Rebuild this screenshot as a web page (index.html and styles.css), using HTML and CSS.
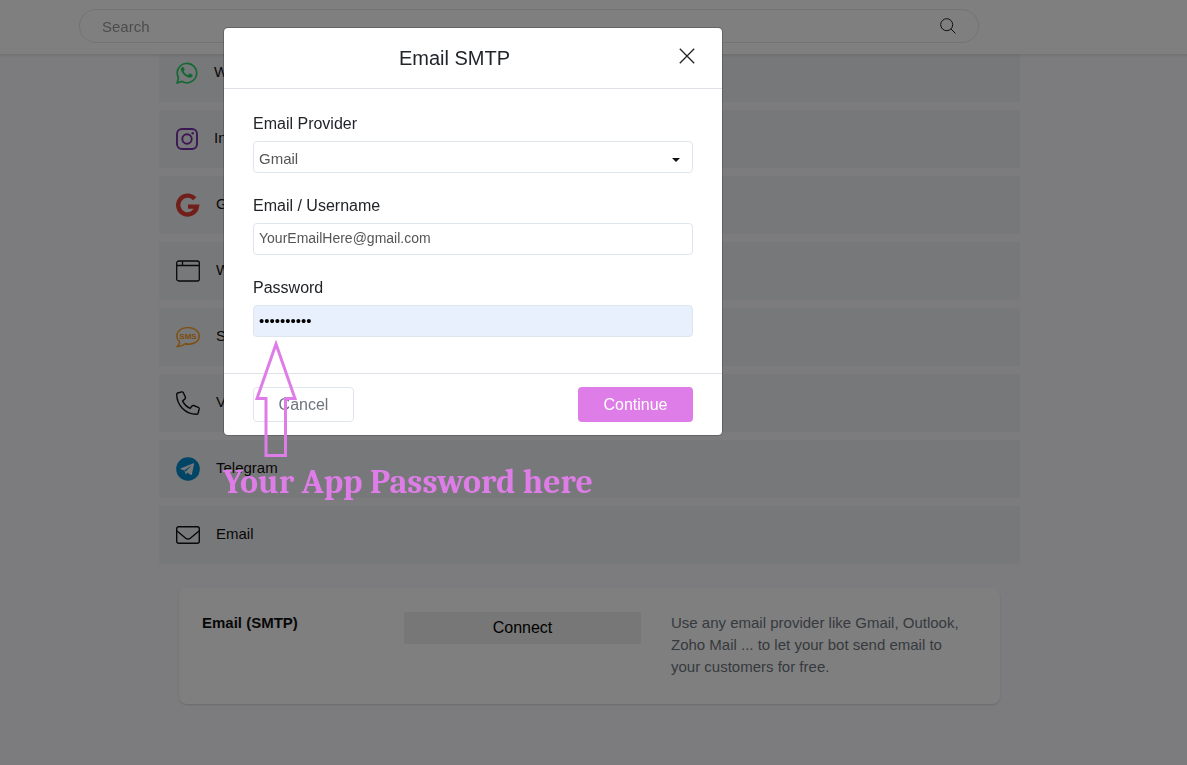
FILE: index.html
```html
<!DOCTYPE html>
<html lang="en">
<head>
    <meta charset="UTF-8">
    <meta name="viewport" content="width=device-width, initial-scale=1.0">
    <title>Email SMTP</title>
    <link rel="stylesheet" href="styles.css">
</head>
<body>
    <header class="topbar">
        <form class="search" role="search">
            <input type="search" placeholder="Search" aria-label="Search">
            <button type="button" aria-label="Search">
                <svg width="16" height="16" viewBox="0 0 16 16" fill="none" stroke="#222" stroke-width="1"><circle cx="6.700" cy="6.700" r="6"/><path d="M11 11l4.500 4.500"/></svg>
            </button>
        </form>
    </header>

    <main class="content">
        <ul class="channels">
            <li><a href="#">
                <svg width="22" height="22" viewBox="0 0 22 22"><path d="M1.200 20.800L2.500 15.800A9.700 9.700 0 1 1 6.200 19.500z" fill="none" stroke="#25d366" stroke-width="1.700"/><path d="M7.700 5.600c-.3-.6-.6-.6-1-.6-.9 0-1.900 1.100-1.900 2.600 0 1.400 1.100 3 2.700 4.700 2.100 2.100 4.500 3.400 6.300 3.400 1.500 0 2.700-1 2.800-2 .1-.8 0-.9-.3-1.100l-2.300-1.100c-.4-.2-.6-.1-.9.300l-.9 1.100c-.2.200-.4.200-.7.100-1.600-.6-3-1.900-3.800-3.400-.1-.3 0-.5.200-.7l.7-.9c.1-.3.1-.5 0-.7z" fill="#25d366"/></svg>
                <span>WhatsApp</span></a></li>
            <li><a href="#">
                <svg width="22" height="22" viewBox="0 0 22 22" fill="none" stroke="#7630a8" stroke-width="1.900"><rect x="1" y="1" width="20" height="20" rx="5"/><circle cx="11" cy="11" r="4.700"/><circle cx="16.700" cy="5.300" r="1.200" fill="#7630a8" stroke="none"/></svg>
                <span>Instagram</span></a></li>
            <li><a href="#">
                <svg width="24" height="24" viewBox="0 0 24 24"><path d="M18.700 5.800A9.400 9.400 0 1 0 20.900 13.600H12" fill="none" stroke="#e33e35" stroke-width="4.400"/></svg>
                <span>Google</span></a></li>
            <li><a href="#">
                <svg width="24" height="22" viewBox="0 0 24 22" fill="none" stroke="#111" stroke-width="1.300"><rect x=".7" y="1" width="22.600" height="20" rx="2"/><path d="M1 5.500h22M6.500 1.200v4.300"/></svg>
                <span>Website</span></a></li>
            <li><a href="#">
                <svg width="24" height="24" viewBox="0 0 24 24"><path d="M3.400 16.400C-2.400 10.400 2.300 2.600 12 2.600c6.100 0 11.300 3.500 11.300 8.300 0 5.800-6.800 9.700-14.100 7.900-2.500 2-5.200 2.900-7.900 2.700 1.900-1.600 2.700-3.200 2.100-5.100z" fill="none" stroke="#ff9a16" stroke-width="1.400"/><text x="12" y="14" text-anchor="middle" class="sms-text">SMS</text></svg>
                <span>SMS</span></a></li>
            <li><a href="#">
                <svg width="24" height="24" viewBox="0 0 24 24" fill="none" stroke="#111" stroke-width="1.400"><path d="M5.700.9L1.700 2C1 2.200.7 2.800.7 3.500 1 14.600 9.300 23 20.600 23.300c.7 0 1.300-.4 1.500-1.100l1.100-4.300c.1-.6-.2-1.300-.9-1.500l-4.700-1.900c-.6-.2-1.200 0-1.600.5l-1.900 2.400C10.800 15.900 8.100 13.200 6.600 9.900L9 7.900c.4-.4.600-1 .4-1.600L7.400 1.700C7.100 1.100 6.400.8 5.700.9z"/></svg>
                <span>Voice</span></a></li>
            <li><a href="#">
                <svg width="24" height="24" viewBox="0 0 24 24"><circle cx="12" cy="12" r="11.800" fill="#0088cc"/><path d="M18.100 6.100L5 11.200c-.8.300-.8.800 0 1.100l3.200 1.100 7.500-4.800-5.900 5.700 4.900 3.600c.6.400 1 .2 1.200-.6l2.200-10.400c.2-.8-.2-1.100-1-.8z" fill="#eceef0"/><path d="M8.500 13.600l1.200 4 2-2.200z" fill="#eceef0"/></svg>
                <span>Telegram</span></a></li>
            <li><a href="#">
                <svg width="24" height="18" viewBox="0 0 24 18" fill="none" stroke="#111" stroke-width="1.400"><rect x=".7" y=".7" width="22.600" height="16.600" rx="2"/><path d="M1 5l8.700 7.200c1.500 1.100 3.100 1.100 4.600 0L23 5"/></svg>
                <span>Email</span></a></li>
        </ul>

        <section class="card">
            <h2>Email (SMTP)</h2>
            <button type="button" class="connect">Connect</button>
            <p>Use any email provider like Gmail, Outlook, Zoho Mail ... to let your bot send email to your customers for free.</p>
        </section>
    </main>

    <div class="backdrop">
        <div class="modal" role="dialog" aria-labelledby="modal-title">
            <div class="modal-header">
                <h1 id="modal-title">Email SMTP</h1>
                <button type="button" class="close" aria-label="Close">
                    <svg width="16" height="16" viewBox="0 0 16 16" stroke="#222" stroke-width="1.300"><path d="M.8.800l14.400 14.400M15.200.800L.8 15.200"/></svg>
                </button>
            </div>
            <form id="smtp-form" class="modal-body">
                <div class="field">
                    <label for="provider">Email Provider</label>
                    <div class="select">
                        <select id="provider">
                            <option>Gmail</option>
                            <option>Outlook</option>
                            <option>Zoho Mail</option>
                        </select>
                    </div>
                </div>
                <div class="field">
                    <label for="username">Email / Username</label>
                    <input type="text" id="username" value="YourEmailHere@gmail.com">
                </div>
                <div class="field">
                    <label for="password">Password</label>
                    <input type="password" id="password" class="filled" value="apppasswrd">
                </div>
            </form>
            <div class="modal-footer">
                <button type="button" class="cancel">Cancel</button>
                <button type="submit" form="smtp-form" class="continue">Continue</button>
            </div>
            <div class="hint">
                <svg width="42" height="118" viewBox="0 0 42 118" fill="none" stroke="#df7de8" stroke-width="3"><path d="M21 4L2 58.500h9v57h19.500v-57H40z"/></svg>
                <p>Your App Password here</p>
            </div>
        </div>
    </div>
</body>
</html>
```
FILE: styles.css
```css
* {
    box-sizing: border-box;
}
body {
    font-family: "Liberation Sans", Arial, sans-serif;
    font-size: 15px;
    margin: 0;
    color: #111;
    background: #f8f9fc;
}
button, input, select {
    font-family: inherit;
}
button {
    padding: 0;
    border: none;
    background: none;
    cursor: pointer;
}
svg {
    display: block;
    flex: none;
}

/* top bar */
.topbar {
    position: fixed;
    top: 0;
    left: 0;
    right: 0;
    z-index: 1;
    height: 54px;
    padding: 9px 208px 0 79px;
    background: #fff;
    box-shadow: 0 1px 2px 1px rgba(0, 0, 0, 0.08);
}
.search {
    display: flex;
    align-items: center;
    height: 34px;
    padding: 0 22px;
    border: 1px solid #e6e6e6;
    border-radius: 17px;
}
.search input {
    flex: 1;
    padding: 0;
    border: none;
    outline: none;
    background: none;
    font-size: 15px;
}
.search input::placeholder {
    color: #999;
}

/* channel list */
.content {
    padding: 44px 167px 0 159px;
}
.channels {
    display: flex;
    flex-direction: column;
    gap: 8px;
    margin: 0;
    padding: 0;
    list-style: none;
}
.channels a {
    display: flex;
    align-items: center;
    gap: 16px;
    height: 58px;
    padding: 0 17px;
    border-radius: 2px;
    background: #eff0f2;
    color: #111;
    text-decoration: none;
}
.channels span {
    padding-bottom: 4px;
}
.sms-text {
    font-size: 8px;
    font-weight: bold;
    fill: #ff9a16;
}

.card {
    display: grid;
    grid-template-columns: 172fr 237fr 300fr;
    gap: 30px;
    align-items: start;
    min-height: 116px;
    margin: 24px 20px;
    padding: 24px 29px 24px 23px;
    border-radius: 8px;
    background: #fff;
    box-shadow: 0 1px 2px rgba(0, 0, 0, 0.15);
}
.card h2 {
    margin: 0;
    font-size: 15px;
    line-height: 22px;
}
.card p {
    margin: 0;
    line-height: 22px;
    color: #6c757d;
}
.connect {
    height: 32px;
    border-radius: 3px;
    background: #efefef;
    color: #000;
    font-size: 16px;
}

/* modal */
.backdrop {
    position: fixed;
    inset: 0;
    z-index: 2;
    padding: 27px 223px;
    background: rgba(0, 0, 0, 0.5);
}
.modal {
    position: relative;
    max-width: 500px;
    border: 1px solid rgba(0, 0, 0, 0.2);
    border-radius: 5px;
    background: #fff;
    background-clip: padding-box;
}
.modal-header {
    display: flex;
    align-items: center;
    gap: 23px;
    height: 61px;
    padding: 0 27px 0 29px;
    border-bottom: 1px solid #dee2e6;
}
.modal-header h1 {
    flex: 1;
    margin: 0;
    font-size: 20px;
    font-weight: normal;
    text-align: center;
    color: #212529;
}
.close {
    padding-bottom: 4px;
}
.modal-body {
    display: flex;
    flex-direction: column;
    gap: 21px;
    padding: 23px 29px 36px;
}
.field {
    display: flex;
    flex-direction: column;
    gap: 5px;
}
.field label {
    font-size: 16px;
    line-height: 24px;
    color: #212529;
}
.field input, .field select {
    width: 100%;
    height: 32px;
    padding: 0 5px 2px;
    border: 1px solid #dfe5ee;
    border-radius: 4px;
    background: #fff;
    color: #555;
    font-size: 14px;
}
.field select {
    appearance: none;
    padding: 2px 5px 0;
    font-size: 15px;
}
.select {
    position: relative;
}
.select::after {
    content: "";
    position: absolute;
    top: 17px;
    right: 13px;
    border: 4px solid transparent;
    border-top-color: #111;
    border-bottom: none;
    pointer-events: none;
}
.field .filled {
    background: #e8f0fe;
    color: #000;
    font-size: 15px;
}
.modal-footer {
    display: flex;
    justify-content: space-between;
    padding: 13px 29px;
    border-top: 1px solid #dee2e6;
}
.modal-footer button {
    height: 35px;
    border-radius: 4px;
    font-size: 16px;
}
.modal-footer .cancel {
    width: 101px;
    border: 1px solid #dfe5ee;
    color: #6c757d;
}
.modal-footer .continue {
    width: 115px;
    background: #df7de8;
    color: #fff;
}

/* arrow and note pointing at the password field */
.hint {
    position: absolute;
    top: 312px;
    left: -1px;
    pointer-events: none;
}
.hint svg {
    margin-left: 32px;
}
.hint p {
    margin: 4px 0 0;
    font: bold 34px/40px Cambria, Caladea, "Liberation Serif", serif;
    white-space: nowrap;
    color: #df7de8;
}
```
